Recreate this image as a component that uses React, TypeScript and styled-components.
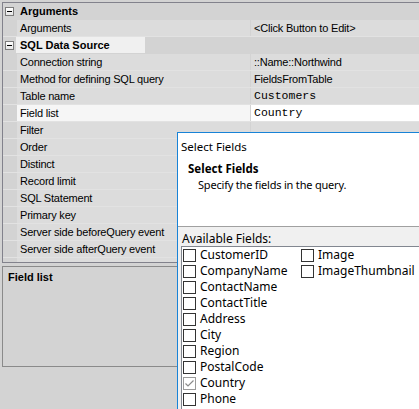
import styled, { createGlobalStyle } from 'styled-components';

const GlobalStyle = createGlobalStyle`
  html, body {
    margin: 0;
    padding: 0;
    background: #d3d3d3;
  }
  body {
    width: 419px;
    height: 409px;
    overflow: hidden;
  }
`;

const LINE = '#d3d3d3';
const ROW = '#dcdcdc';

type Prop = { name: string; value?: string; mono?: boolean; selected?: boolean };
type Category = { title: string; focused?: boolean; props: Prop[] };

const categories: Category[] = [
  {
    title: 'Arguments',
    props: [{ name: 'Arguments', value: '<Click Button to Edit>' }],
  },
  {
    title: 'SQL Data Source',
    focused: true,
    props: [
      { name: 'Connection string', value: '::Name::Northwind' },
      { name: 'Method for defining SQL query', value: 'FieldsFromTable' },
      { name: 'Table name', value: 'Customers', mono: true },
      { name: 'Field list', value: 'Country', mono: true, selected: true },
      { name: 'Filter' },
      { name: 'Order' },
      { name: 'Distinct' },
      { name: 'Record limit' },
      { name: 'SQL Statement' },
      { name: 'Primary key' },
      { name: 'Server side beforeQuery event' },
      { name: 'Server side afterQuery event' },
      { name: 'Error handling' },
    ],
  },
];

const fields = [
  'CustomerID',
  'CompanyName',
  'ContactName',
  'ContactTitle',
  'Address',
  'City',
  'Region',
  'PostalCode',
  'Country',
  'Phone',
  'Fax',
  'Image',
  'ImageThumbnail',
];

function MinusBox() {
  return (
    <Expander>
      <span />
    </Expander>
  );
}

function CheckBox({ checked }: { checked?: boolean }) {
  return (
    <Box $checked={checked}>
      {checked && (
        <svg width="11" height="11" viewBox="0 0 11 11">
          <path d="M1.5 5.5 L4 8 L9.5 2.5" fill="none" stroke="#8a8a8a" strokeWidth="1.2" />
        </svg>
      )}
    </Box>
  );
}

export default function App() {
  return (
    <Screen>
      <GlobalStyle />
      <PropertyGrid>
        {categories.map((cat) => (
          <div key={cat.title}>
            <CategoryRow>
              <Margin>
                <MinusBox />
              </Margin>
              <CategoryLabel $focused={cat.focused}>{cat.title}</CategoryLabel>
            </CategoryRow>
            {cat.props.map((p) => (
              <PropRow key={p.name}>
                <Margin />
                <LabelCell $selected={p.selected}>{p.name}</LabelCell>
                <Divider />
                <ValueCell $selected={p.selected} $mono={p.mono}>
                  {p.value}
                </ValueCell>
              </PropRow>
            ))}
          </div>
        ))}
      </PropertyGrid>
      <HelpPanel>
        <HelpTitle>Field list</HelpTitle>
      </HelpPanel>

      <Dialog>
        <TitleBar>Select Fields</TitleBar>
        <DialogHeader>
          <HeaderTitle>Select Fields</HeaderTitle>
          <HeaderText>Specify the fields in the query.</HeaderText>
        </DialogHeader>
        <DialogBody>
          <FieldLabel>Available Fields:</FieldLabel>
          <FieldList>
            {fields.map((f) => (
              <FieldItem key={f}>
                <CheckBox checked={f === 'Country'} />
                <span>{f}</span>
              </FieldItem>
            ))}
          </FieldList>
        </DialogBody>
      </Dialog>
    </Screen>
  );
}

const Screen = styled.div`
  position: relative;
  width: 419px;
  height: 409px;
  overflow: hidden;
  box-sizing: border-box;
  padding: 2px 0 0 2px;
  background: #d3d3d3;
  font-family: 'Liberation Sans', Arial, sans-serif;
  font-size: 11px;
  color: #000;
  display: flex;
  flex-direction: column;
  gap: 2px;
`;

const PropertyGrid = styled.div`
  flex-shrink: 0;
  width: 470px;
  height: 261px;
  box-sizing: border-box;
  border: 1px solid #82828c;
  overflow: hidden;
  background: ${LINE};
`;

const CategoryRow = styled.div`
  display: flex;
  align-items: stretch;
  height: 16px;
  border-bottom: 1px solid ${LINE};
  background: ${LINE};
`;

const Margin = styled.div`
  width: 14px;
  flex-shrink: 0;
  display: flex;
  align-items: center;
  background: ${LINE};
`;

const Expander = styled.div`
  margin-left: 2px;
  width: 9px;
  height: 9px;
  box-sizing: border-box;
  border: 1px solid #7c7c7c;
  background: linear-gradient(#ffffff, #e6e6e6);
  display: flex;
  align-items: center;
  justify-content: center;

  span {
    width: 5px;
    height: 1px;
    background: #000;
  }
`;

const CategoryLabel = styled.div<{ $focused?: boolean }>`
  font-weight: bold;
  line-height: 16px;
  padding: 0 0 0 3px;
  ${(p) => (p.$focused ? 'width: 125px; background: #f0f0f0; margin-left: -1px; padding-left: 4px;' : '')}
`;

const PropRow = styled.div`
  display: grid;
  grid-template-columns: 14px 233px 1px 1fr;
  height: 16px;
  border-bottom: 1px solid #e2e2e2;
  line-height: 16px;
`;

const LabelCell = styled.div<{ $selected?: boolean }>`
  padding-left: 3px;
  white-space: nowrap;
  overflow: hidden;
  letter-spacing: -0.2px;
  background: ${(p) => (p.$selected ? '#f6f6f6' : ROW)};
`;

const Divider = styled.div`
  background: ${LINE};
`;

const ValueCell = styled.div<{ $selected?: boolean; $mono?: boolean }>`
  padding-left: 3px;
  white-space: nowrap;
  background: ${(p) => (p.$selected ? '#ffffff' : ROW)};
  font-family: ${(p) =>
    p.$mono ? "'Liberation Mono', 'Courier New', monospace" : "'Liberation Sans', Arial, sans-serif"};
  font-size: ${(p) => (p.$mono ? '11.5px' : '11px')};
  letter-spacing: ${(p) => (p.$mono ? '0' : '-0.2px')};
`;

const HelpPanel = styled.div`
  flex-shrink: 0;
  margin-top: 1px;
  width: 470px;
  height: 101px;
  box-sizing: border-box;
  border: 1px solid #8a8a8a;
  padding: 3px 5px;
`;

const HelpTitle = styled.div`
  font-weight: bold;
  line-height: 14px;
`;

const Dialog = styled.div`
  position: absolute;
  left: 177px;
  top: 132px;
  width: 290px;
  height: 320px;
  border: 1px solid #1883d7;
  background: #f0f0f0;
  font-family: 'Noto Sans', 'Segoe UI', sans-serif;
  font-size: 12px;
  color: #000;
  display: flex;
  flex-direction: column;
`;

const TitleBar = styled.div`
  height: 26px;
  padding-left: 3px;
  display: flex;
  align-items: center;
  background: #fff;
  font-size: 11.5px;
`;

const DialogHeader = styled.div`
  height: 68px;
  box-sizing: border-box;
  padding: 2px 0 0 10px;
  background: #fff;
  border-bottom: 1px solid #a0a0a0;
`;

const HeaderTitle = styled.div`
  font-weight: bold;
  font-size: 11.5px;
  line-height: 16px;
`;

const HeaderText = styled.div`
  padding-left: 10px;
  font-size: 11px;
  letter-spacing: -0.2px;
  line-height: 16px;
`;

const DialogBody = styled.div`
  padding: 4px 0 0 3px;
`;

const FieldLabel = styled.div`
  padding-left: 1px;
  line-height: 15px;
`;

const FieldList = styled.div`
  height: 200px;
  box-sizing: border-box;
  border: 1px solid #828790;
  background: #fff;
  padding-left: 1px;
  display: grid;
  grid-auto-flow: column;
  grid-template-rows: repeat(11, 16px);
  grid-auto-columns: 118px;
`;

const FieldItem = styled.div`
  display: flex;
  align-items: center;
  gap: 4px;
  white-space: nowrap;
  line-height: 16px;
`;

const Box = styled.span<{ $checked?: boolean }>`
  width: 13px;
  height: 13px;
  box-sizing: border-box;
  flex-shrink: 0;
  border: 1px solid ${(p) => (p.$checked ? '#9a9a9a' : '#333')};
  background: #fff;
  display: flex;
  align-items: center;
  justify-content: center;
`;
